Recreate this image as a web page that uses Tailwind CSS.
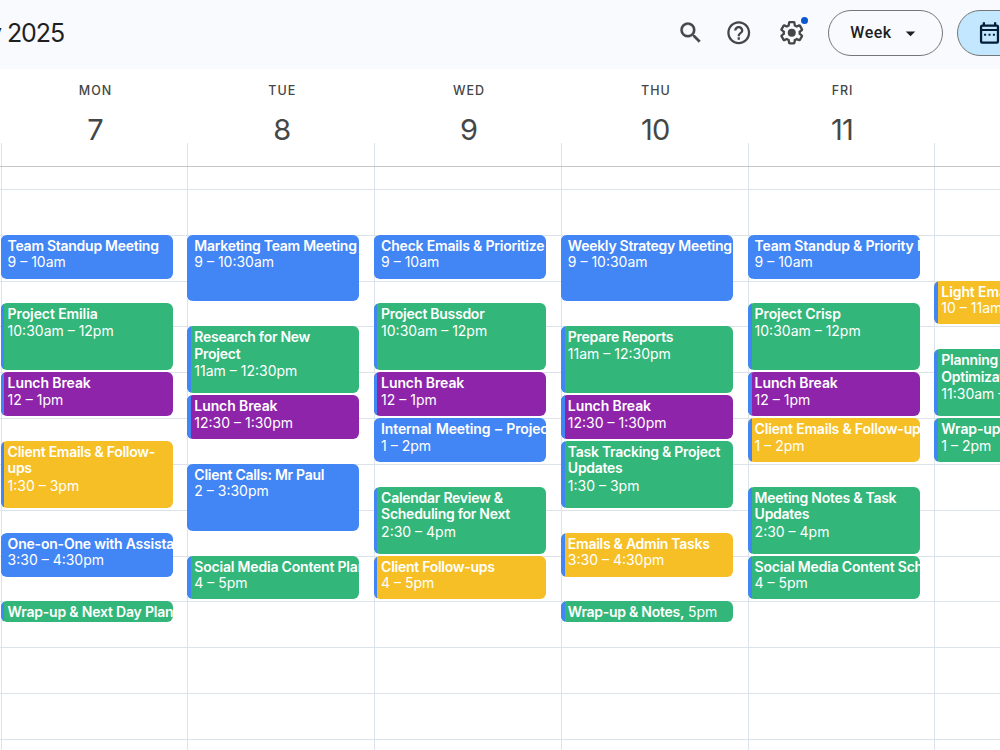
<!DOCTYPE html>
<html lang="en">
<head>
  <meta charset="UTF-8" />
  <meta name="viewport" content="width=device-width, initial-scale=1.0" />
  <title>Calendar - July 2025</title>
  <script src="https://cdn.jsdelivr.net/npm/@tailwindcss/browser@4"></script>
</head>
<body class="h-[750px] w-[1000px] overflow-hidden bg-white font-['Inter','Liberation_Sans',sans-serif] text-[#1f1f1f]">

  <!-- Toolbar -->
  <header class="flex h-[69px] w-[1000px] items-start overflow-hidden bg-[#f8fafd]">
    <div class="mt-[15px] flex h-[38px] w-[64px] shrink-0 items-center justify-end overflow-hidden whitespace-nowrap">
      <h1 class="shrink-0 text-[25px] tracking-[-1.1px]">July 2025</h1>
    </div>

    <div class="ml-[613px] flex shrink-0 items-start text-[#444746]">
      <button class="mt-[19px]" aria-label="Search">
        <svg class="size-[27.5px]" viewBox="0 0 24 24" fill="currentColor" stroke="currentColor" stroke-width="0.3"><path d="M15.500 14h-.790l-.280-.270A6.471 6.471 0 0 0 16 9.500 6.500 6.500 0 1 0 9.500 16c1.610 0 3.090-.590 4.230-1.570l.270.280v.790l5 4.990L20.490 19l-4.990-5zm-6 0C7.010 14 5 11.990 5 9.500S7.010 5 9.500 5 14 7.010 14 9.500 11.990 14 9.500 14z"/></svg>
      </button>
      <button class="mt-[19px] ml-[20px]" aria-label="Support">
        <svg class="size-[27.5px]" viewBox="0 0 24 24" fill="currentColor"><path d="M11 18h2v-2h-2v2zm1-16C6.480 2 2 6.480 2 12s4.480 10 10 10 10-4.480 10-10S17.520 2 12 2zm0 18c-4.410 0-8-3.590-8-8s3.590-8 8-8 8 3.590 8 8-3.590 8-8 8zm0-14c-2.210 0-4 1.790-4 4h2c0-1.100.9-2 2-2s2 .9 2 2c0 2-3 1.750-3 5h2c0-2.250 3-2.500 3-5 0-2.210-1.790-4-4-4z"/></svg>
      </button>
      <button class="relative mt-[19px] ml-[25.5px]" aria-label="Settings">
        <svg class="size-[27.5px]" viewBox="0 0 24 24" fill="currentColor"><path d="M13.850 22.250h-3.700c-.740 0-1.360-.540-1.450-1.270l-.270-1.890c-.270-.140-.530-.290-.790-.460l-1.800.720c-.700.260-1.470-.030-1.810-.650L2.200 15.530c-.350-.660-.200-1.440.360-1.880l1.530-1.190c-.010-.150-.020-.300-.020-.460 0-.150.010-.310.020-.460l-1.520-1.190c-.590-.450-.740-1.260-.370-1.880l1.850-3.190c.340-.620 1.110-.900 1.790-.630l1.810.730c.260-.170.520-.320.780-.460l.270-1.910c.090-.700.710-1.250 1.440-1.250h3.700c.740 0 1.360.540 1.450 1.270l.270 1.890c.270.140.530.290.790.460l1.800-.720c.710-.260 1.480.030 1.820.650l1.840 3.180c.360.660.200 1.440-.360 1.880l-1.520 1.190c.010.150.020.300.020.460s-.010.310-.020.460l1.520 1.190c.560.450.720 1.230.370 1.860l-1.860 3.220c-.340.620-1.110.900-1.800.630l-1.800-.720c-.260.170-.520.320-.780.460l-.270 1.910c-.100.680-.720 1.220-1.460 1.220zm-3.230-2h2.760l.370-2.550.530-.220c.440-.180.880-.440 1.340-.780l.450-.340 2.380.960 1.380-2.400-2.030-1.580.070-.560c.030-.260.060-.510.060-.780s-.030-.530-.060-.780l-.070-.560 2.030-1.580-1.390-2.400-2.390.960-.450-.350c-.420-.320-.870-.580-1.330-.770l-.520-.220-.370-2.550h-2.760l-.370 2.550-.530.210c-.440.190-.880.440-1.340.790l-.450.330-2.380-.950-1.390 2.390 2.030 1.580-.070.560a7 7 0 0 0-.060.790c0 .260.020.530.060.780l.070.560-2.030 1.580 1.380 2.400 2.390-.960.450.350c.430.330.860.580 1.330.770l.530.220z"/><circle cx="12" cy="12" r="3.500"/></svg>
        <span class="absolute top-[-2px] left-[23px] size-[7px] rounded-full bg-[#0b57d0]"></span>
      </button>
      <button class="mt-[10px] ml-[23px] flex h-[46px] w-[115px] items-center rounded-full border border-[#747775] pl-[21px] text-[16px] font-medium text-[#1f1f1f]">
        <span class="w-[42px] font-[Roboto,sans-serif] tracking-[0.5px]">Week</span>
        <svg class="ml-[5px] size-[27px]" viewBox="0 0 24 24" fill="currentColor"><path d="M7.800 10.200l4.200 4.200 4.200-4.200z"/></svg>
      </button>
      <button class="mt-[10px] ml-[14px] flex h-[46px] w-[120px] items-center rounded-full border border-[#747775] bg-[#c2e7ff] pl-[18px] text-[#001d35]" aria-label="Switch to Calendar">
        <svg class="size-[27px]" viewBox="0 0 24 24" fill="currentColor"><path fill-rule="evenodd" d="M18.500 4H18V2h-2v2H8V2H6v2h-.500a2 2 0 0 0-2 2v13a2 2 0 0 0 2 2h13a2 2 0 0 0 2-2V6a2 2 0 0 0-2-2zm0 15h-13V9.800h13V19zm0-11h-13V6h13v2zM7.200 12.200h1.800V14H7.200zm3.900 0h1.800V14h-1.800zm3.900 0h1.800V14H15z"/></svg>
      </button>
    </div>
  </header>

  <div class="w-[1000px] overflow-hidden">
    <!-- Day names and dates -->
    <div id="days" class="flex h-[98px] border-b border-[#c4c7c5] pl-[0.6px]"></div>

    <!-- Week grid: half-hour rows, starting at 7:30 -->
    <main class="relative h-[583px] overflow-hidden">
      <div id="lines" class="absolute inset-0 pt-[21.85px]"></div>
      <div id="week" class="relative flex h-full pl-[0.6px]"></div>
    </main>
  </div>

  <script>
    const colors = {
      blue: 'bg-[#4285f4]',
      green: 'bg-[#33b679]',
      purple: 'bg-[#8e24aa]',
      yellow: 'bg-[#f6bf26]',
    };

    // [start hour, length in hours, color, title, time label]
    const week = [
      { name: 'MON', date: 7, stripe: 'w-[3px]', events: [
        [9, 1, 'blue', 'Team Standup Meeting', '9 – 10am'],
        [10.5, 1.5, 'green', 'Project Emilia', '10:30am – 12pm'],
        [12, 1, 'purple', 'Lunch Break', '12 – 1pm'],
        [13.5, 1.5, 'yellow', 'Client Emails & Follow-<br>ups', '1:30 – 3pm'],
        [15.5, 1, 'blue', 'One-on-One with Assistant', '3:30 – 4:30pm'],
        [17, 0.5, 'green', 'Wrap-up & Next Day Planning', ''],
      ]},
      { name: 'TUE', date: 8, stripe: 'w-[4px]', events: [
        [9, 1.5, 'blue', 'Marketing Team Meeting', '9 – 10:30am'],
        [11, 1.5, 'green', 'Research for New<br>Project', '11am – 12:30pm'],
        [12.5, 1, 'purple', 'Lunch Break', '12:30 – 1:30pm'],
        [14, 1.5, 'blue', 'Client Calls: Mr Paul', '2 – 3:30pm'],
        [16, 1, 'green', 'Social Media Content Planning', '4 – 5pm'],
      ]},
      { name: 'WED', date: 9, stripe: 'w-[3px]', events: [
        [9, 1, 'blue', 'Check Emails & Prioritize', '9 – 10am'],
        [10.5, 1.5, 'green', 'Project Bussdor', '10:30am – 12pm'],
        [12, 1, 'purple', 'Lunch Break', '12 – 1pm'],
        [13, 1, 'blue', 'Internal Meeting – Project', '1 – 2pm'],
        [14.5, 1.5, 'green', 'Calendar Review &<br>Scheduling for Next', '2:30 – 4pm'],
        [16, 1, 'yellow', 'Client Follow-ups', '4 – 5pm'],
      ]},
      { name: 'THU', date: 10, stripe: 'w-[4px]', events: [
        [9, 1.5, 'blue', 'Weekly Strategy Meeting', '9 – 10:30am'],
        [11, 1.5, 'green', 'Prepare Reports', '11am – 12:30pm'],
        [12.5, 1, 'purple', 'Lunch Break', '12:30 – 1:30pm'],
        [13.5, 1.5, 'green', 'Task Tracking & Project<br>Updates', '1:30 – 3pm'],
        [15.5, 1, 'yellow', 'Emails & Admin Tasks', '3:30 – 4:30pm'],
        [17, 0.5, 'green', 'Wrap-up & Notes,', '5pm'],
      ]},
      { name: 'FRI', date: 11, stripe: 'w-[4px]', events: [
        [9, 1, 'blue', 'Team Standup & Priority Review', '9 – 10am'],
        [10.5, 1.5, 'green', 'Project Crisp', '10:30am – 12pm'],
        [12, 1, 'purple', 'Lunch Break', '12 – 1pm'],
        [13, 1, 'yellow', 'Client Emails & Follow-ups', '1 – 2pm'],
        [14.5, 1.5, 'green', 'Meeting Notes & Task<br>Updates', '2:30 – 4pm'],
        [16, 1, 'green', 'Social Media Content Schedule', '4 – 5pm'],
      ]},
      { name: '', date: '', stripe: 'w-[4px]', events: [
        [10, 1, 'yellow', 'Light Email', '10 – 11am'],
        [11.5, 1.5, 'green', 'Planning &<br>Optimization', '11:30am – 1pm'],
        [13, 1, 'green', 'Wrap-up', '1 – 2pm'],
      ]},
    ];

    // short and clipped titles keep looser letter spacing
    const tracking = title => {
      if (title.includes('–')) return 'tracking-[-0.15px] [word-spacing:1.2px]';
      if (title.length <= 14) return 'tracking-[-0.1px]';
      if (title.length >= 25 && !title.includes('<br>')) return 'tracking-[-0.2px]';
      return 'tracking-[-0.27px]';
    };

    document.getElementById('days').innerHTML = week.map(day => `
      <div class="flex w-[186.75px] shrink-0 flex-col">
        <div class="flex h-[74px] w-[189px] flex-col items-center text-[#444746]">
          <span class="mt-[13px] ml-[1px] text-[12.5px] leading-[18px] font-medium tracking-[1px]">${day.name}</span>
          <span class="mt-[12px] text-[29px] leading-[36px] tracking-[-0.8px]">${day.date}</span>
        </div>
        <div class="flex-1 border-l border-[#dde3ea]"></div>
      </div>`).join('');

    document.getElementById('lines').innerHTML =
      '<div class="h-[45.85px] border-t border-[#dde3ea]"></div>'.repeat(13);

    document.getElementById('week').innerHTML = week.map(day => `
      <div class="grid w-[186.75px] shrink-0 grid-rows-[21.85px_repeat(25,22.925px)] border-l border-[#dde3ea]">
        ${day.events.map(([start, hours, color, title, time]) => `
          <div class="col-start-1 -ml-px mb-[2px] flex w-[172px] overflow-hidden rounded-[6px] ${colors[color]}" style="grid-row: ${(start - 7) * 2} / span ${hours * 2}">
            <div class="shrink-0 bg-[#4285f4] ${day.stripe}"></div>
            <div class="${day.stripe === 'w-[3px]' ? 'ml-[4px]' : 'ml-[3px]'} pt-[3px] text-[14px] leading-[16.5px] whitespace-nowrap text-white">
              <span class="font-semibold ${tracking(title)}">${title}</span>${hours < 1 ? ' ' : '<br>'}<span class="${title.includes('<br>') ? 'relative top-px' : ''}">${time}</span>
            </div>
          </div>`).join('')}
      </div>`).join('');
  </script>
</body>
</html>
